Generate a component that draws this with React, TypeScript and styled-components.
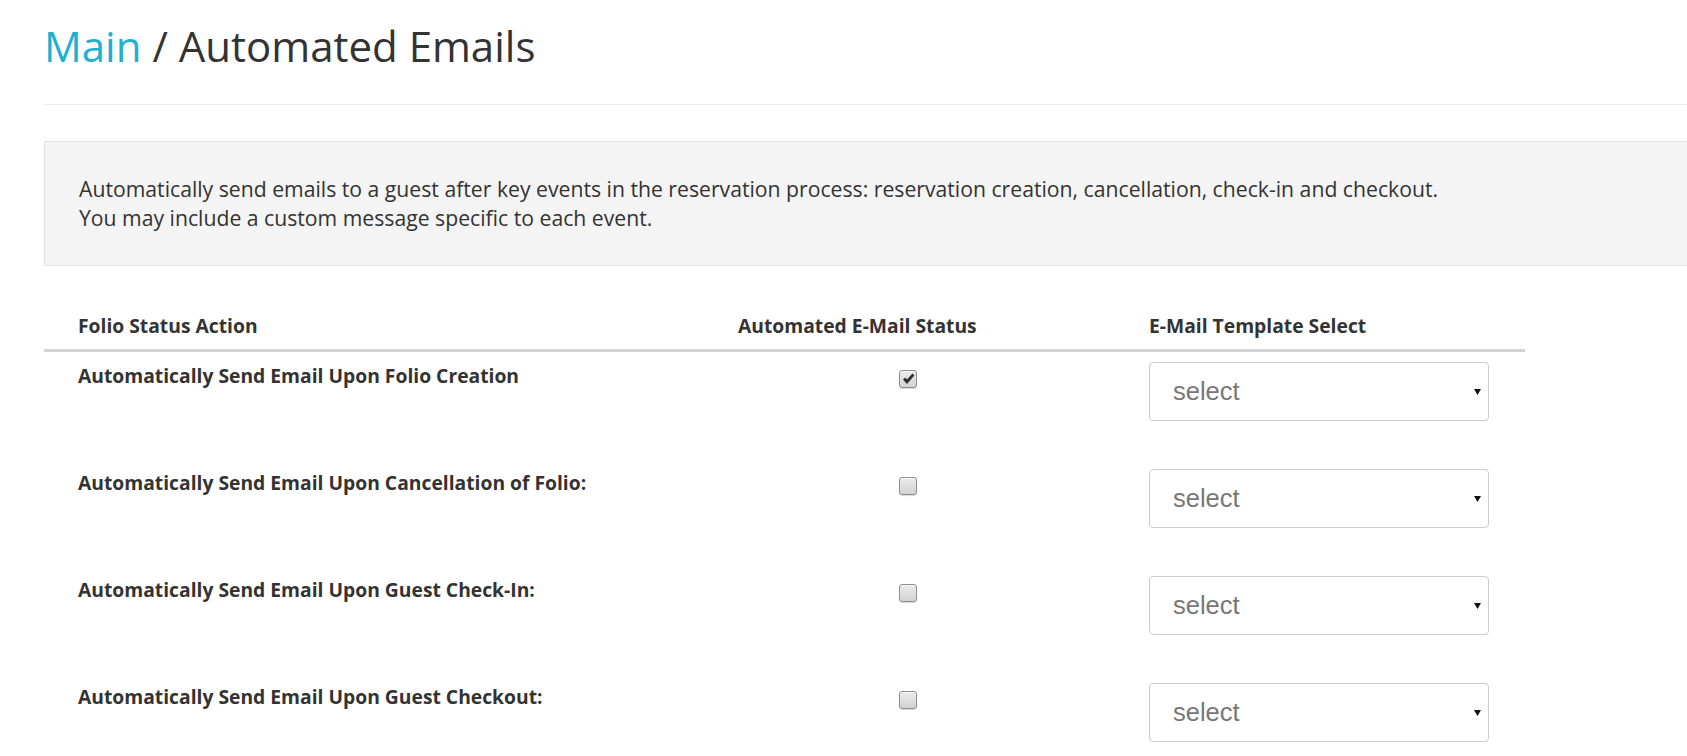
import React from 'react';
import styled, { createGlobalStyle } from 'styled-components';

const GlobalStyle = createGlobalStyle`
  html, body {
    margin: 0;
    padding: 0;
    overflow: hidden;
    background: #ffffff;
  }
  body {
    font-family: "Open Sans", "Noto Sans", sans-serif;
    color: #333333;
  }
`;

const Page = styled.div`
  width: 1760px;
  padding-left: 44px;
  box-sizing: border-box;
`;

const Title = styled.h1`
  margin: 23.3px 0 0;
  font-size: 42px;
  line-height: 46.2px;
  font-weight: 400;
  color: #333333;
`;

const Crumb = styled.a`
  color: #1cb0d4;
  text-decoration: none;
`;

const Rule = styled.hr`
  margin: 34.5px 0 0;
  border: 0;
  border-top: 1px solid #eaeaea;
`;

const InfoBox = styled.div`
  margin-top: 36px;
  background: #f4f4f4;
  border: 1px solid #e3e3e3;
  padding: 31.5px 34px 32.5px;
  font-size: 21.2px;
  line-height: 29.5px;
  color: #333333;
`;

const Table = styled.div`
  margin-top: 34px;
  width: 1481px;
  display: grid;
  grid-template-columns: 660px 411px 410px;
`;

const HeadCell = styled.div`
  padding: 12px 34px 10px;
  font-size: 19.3px;
  font-weight: 700;
  line-height: 27.3px;
  border-bottom: 3px solid #d4d4d4;
  color: #333333;
`;

const Cell = styled.div<{ $center?: boolean }>`
  padding: 10px 34px 38px;
  font-size: 19.3px;
  font-weight: 700;
  line-height: 27.3px;
  color: #333333;
  display: flex;
  align-items: flex-start;
  justify-content: ${(p) => (p.$center ? 'center' : 'flex-start')};
`;

const CheckBox = styled.span`
  margin: 7.5px 3px 0 0;
  width: 18px;
  height: 18px;
  box-sizing: border-box;
  border: 1px solid #8e8e8e;
  border-radius: 3px;
  background: linear-gradient(#ececec, #d2d2d2);
  box-shadow: 0 1px 1px rgba(0, 0, 0, 0.15), inset 0 1px 0 #f8f8f8;
  display: flex;
  align-items: center;
  justify-content: center;
`;

const SelectBox = styled.div`
  width: 340px;
  height: 59px;
  box-sizing: border-box;
  border: 1px solid #cccccc;
  border-radius: 4px;
  background: #ffffff;
  display: flex;
  align-items: center;
  justify-content: space-between;
  padding: 0 7px 0 23px;
  font-family: "Liberation Sans", Arial, sans-serif;
  font-size: 25.5px;
  font-weight: 400;
  color: #777777;
`;

const rows = [
  { label: 'Automatically Send Email Upon Folio Creation', checked: true },
  { label: 'Automatically Send Email Upon Cancellation of Folio:', checked: false },
  { label: 'Automatically Send Email Upon Guest Check-In:', checked: false },
  { label: 'Automatically Send Email Upon Guest Checkout:', checked: false },
];

const Arrow = () => (
  <svg width="7" height="6" viewBox="0 0 7 6">
    <path d="M0 0 L7 0 L3.5 6 Z" fill="#111" />
  </svg>
);

const Check = () => (
  <svg width="13" height="12" viewBox="0 0 13 12">
    <path d="M1 6.4 L3.4 4.4 L5 6.6 L10.4 0.6 L12.4 2.6 L5 11 Z" fill="#2f2f2f" />
  </svg>
);

export default function App() {
  return (
    <>
      <GlobalStyle />
      <Page>
        <Title>
          <Crumb href="#">Main</Crumb> / Automated Emails
        </Title>
        <Rule />
        <InfoBox>
          Automatically send emails to a guest after key events in the reservation process: reservation creation, cancellation, check-in and checkout.
          <br />
          You may include a custom message specific to each event.
        </InfoBox>
        <Table>
          <HeadCell>Folio Status Action</HeadCell>
          <HeadCell>Automated E-Mail Status</HeadCell>
          <HeadCell>E-Mail Template Select</HeadCell>
          {rows.map((r) => (
            <React.Fragment key={r.label}>
              <Cell>{r.label}</Cell>
              <Cell $center>
                <CheckBox>{r.checked && <Check />}</CheckBox>
              </Cell>
              <Cell>
                <SelectBox>
                  <span>select</span>
                  <Arrow />
                </SelectBox>
              </Cell>
            </React.Fragment>
          ))}
        </Table>
      </Page>
    </>
  );
}
